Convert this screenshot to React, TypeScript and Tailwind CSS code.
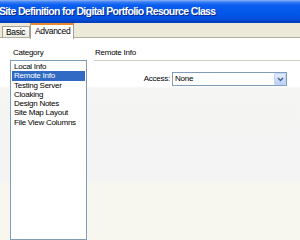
import React from "react";

const items = [
  "Local Info",
  "Remote Info",
  "Testing Server",
  "Cloaking",
  "Design Notes",
  "Site Map Layout",
  "File View Columns",
];

export default function App() {
  return (
    <div className="w-[300px] h-[240px] overflow-hidden flex flex-col bg-white font-['Liberation_Sans',Arial,sans-serif] text-black">
      {/* Title bar */}
      <div className="h-[23px] shrink-0 bg-[linear-gradient(to_bottom,#8fb4f5_0px,#3a80f5_2px,#0a5ef0_5px,#0056e8_14px,#0050dd_19px,#003fbf_22px)] flex items-center">
        <span className="text-white font-bold text-[10.5px] tracking-[-0.65px] leading-none -ml-[1px] [text-shadow:1px_1px_0_#0a2a8a]">
          Site Definition for Digital Portfolio Resource Class
        </span>
      </div>

      {/* Tabs */}
      <div className="h-[15px] shrink-0 bg-[#ece9d8] border-b border-[#b0ae9f] flex items-end pl-[2px] relative">
        <div className="h-[11px] w-[28px] border border-b-0 border-[#a5a292] bg-[linear-gradient(#fdfdfb,#ecebe4)] text-[8.5px] tracking-[-0.3px] leading-[10px] pl-[3px] text-black">
          Basic
        </div>
        <div className="absolute left-[30px] top-[0px] h-[16px] w-[44px] border border-b-0 border-[#a5a292] border-t-[#e68b2c] border-t-2 bg-white text-[8.5px] tracking-[-0.3px] leading-[12px] pl-[4px]">
          Advanced
        </div>
      </div>

      {/* Body */}
      <div className="flex-1 flex bg-[linear-gradient(to_bottom,#ffffff_0px,#ffffff_48px,#f5f5f4_50px,#f4f4f4_142px,#f7f6ef_146px,#f7f6ef_200px)] text-[8px] tracking-[-0.25px]">
        <div className="w-[87px] shrink-0 pl-[10px] flex flex-col">
          <div className="h-[22px] pl-[3px] pt-[10px] leading-[9px]">Category</div>
          <div className="flex-1 border border-[#7f9db9] bg-white pt-[1px] px-[1px]">
            {items.map((it, i) => (
              <div
                key={it}
                className={
                  "h-[9.3px] leading-[9.3px] pl-[2px] whitespace-nowrap " +
                  (i === 1 ? "bg-[#316ac5] text-white" : "")
                }
              >
                {it}
              </div>
            ))}
          </div>
        </div>

        <div className="flex-1 pl-[7px] flex flex-col">
          <div className="pt-[10px] h-[22px] leading-[9px] pl-[1px]">Remote Info</div>
          <div className="h-px bg-[#d0cfc3]" />
          <div className="flex items-center mt-[11px] pl-[48px]">
            <span className="w-[30px] text-right pr-[2px]">Access:</span>
            <div className="w-[115px] h-[14px] border border-[#7f9db9] bg-white flex items-center justify-between">
              <span className="pl-[2px] leading-none">None</span>
              <div className="w-[12px] h-[12px] rounded-[1px] bg-[linear-gradient(#e3ecfd,#b9d0f6)] border border-[#c3d3fd] flex items-center justify-center">
                <svg width="7" height="5" viewBox="0 0 7 5">
                  <path d="M1 1 L3.5 3.5 L6 1" fill="none" stroke="#4d6185" strokeWidth="1.5" />
                </svg>
              </div>
            </div>
          </div>
        </div>
      </div>
    </div>
  );
}
